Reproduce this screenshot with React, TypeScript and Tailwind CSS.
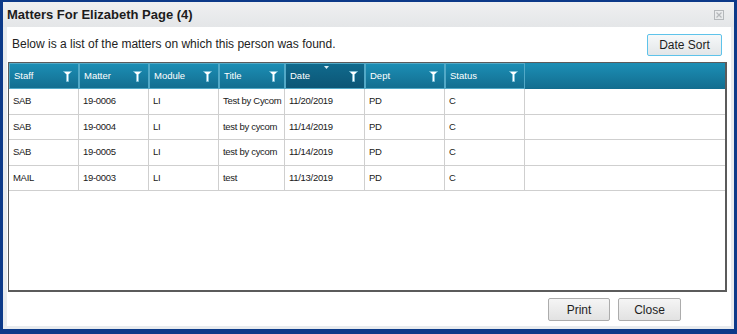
import React from 'react';

type Row = { staff: string; matter: string; module: string; title: string; date: string; dept: string; status: string };

const rows: Row[] = [
    { staff: 'SAB', matter: '19-0006', module: 'LI', title: 'Test by Cycom', date: '11/20/2019', dept: 'PD', status: 'C' },
    { staff: 'SAB', matter: '19-0004', module: 'LI', title: 'test by cycom', date: '11/14/2019', dept: 'PD', status: 'C' },
    { staff: 'SAB', matter: '19-0005', module: 'LI', title: 'test by cycom', date: '11/14/2019', dept: 'PD', status: 'C' },
    { staff: 'MAIL', matter: '19-0003', module: 'LI', title: 'test', date: '11/13/2019', dept: 'PD', status: 'C' },
];

const columns: { key: keyof Row; label: string; width: string }[] = [
    { key: 'staff', label: 'Staff', width: 'w-[70px]' },
    { key: 'matter', label: 'Matter', width: 'w-[70px]' },
    { key: 'module', label: 'Module', width: 'w-[70px]' },
    { key: 'title', label: 'Title', width: 'w-[66px]' },
    { key: 'date', label: 'Date', width: 'w-[80px]' },
    { key: 'dept', label: 'Dept', width: 'w-[80px]' },
    { key: 'status', label: 'Status', width: 'w-[80px]' },
];

const FilterIcon: React.FC = () => (
    <svg width="9" height="11" viewBox="0 0 9 11" className="shrink-0">
        <path d="M0.5 0.5 H8.5 L5.5 3.5 V10.5 H3.5 V3.5 Z" fill="#ffffff" stroke="#7fc3da" strokeWidth="0.8" />
    </svg>
);

const CloseIcon: React.FC = () => (
    <svg width="10" height="10" viewBox="0 0 10 10">
        <rect x="0.5" y="0.5" width="9" height="9" fill="none" stroke="#b5b8bb" />
        <path d="M2.5 2.5 L7.5 7.5 M7.5 2.5 L2.5 7.5" stroke="#b5b8bb" strokeWidth="1.2" />
    </svg>
);

const App: React.FC = () => {
    return (
        <div className="w-[737px] h-[334px] bg-[#0c3a89] pt-[2px] pl-[3px] pr-[3px] pb-[5px] flex flex-col font-['Liberation_Sans',Arial,sans-serif]">
            <div className="flex-1 flex flex-col bg-[#e8ebee]">
                {/* title bar */}
                <div className="h-[25px] flex items-center justify-between pl-[4px] pr-[10px] bg-gradient-to-b from-[#eff0f1] to-[#e4e6e8]">
                    <span className="text-[13px] font-bold text-[#1c1c1c]">Matters For Elizabeth Page (4)</span>
                    <CloseIcon />
                </div>

                <div className="flex-1 flex flex-col bg-white mx-[4px] mb-[3px] mr-[3px]">
                    <div className="flex items-center justify-between pl-[5px] pr-[9px] pt-[4px] h-[31px]">
                        <span className="text-[12px] text-[#222] -mt-[2px]">Below is a list of the matters on which this person was found.</span>
                        <button className="w-[75px] h-[22px] rounded-[2px] border border-[#5ec3ea] bg-gradient-to-b from-[#f6f8f9] to-[#e3e6e8] text-[12px] text-[#1e1e1e]">
                            Date Sort
                        </button>
                    </div>

                    {/* grid */}
                    <div className="ml-px mr-[4px] mt-[4px] h-[230px] border border-[#5b5b5b] border-b-2 border-r-2 flex flex-col">
                        <div className="h-[26px] flex bg-gradient-to-b from-[#1c8fb6] to-[#136d8f]">
                            {columns.map(col => (
                                <div
                                    key={col.key}
                                    className={`${col.width} relative h-full flex items-center justify-between pl-[4px] pr-[6px] border border-[#52a9c7] ${col.key === 'date' ? 'bg-gradient-to-b from-[#106a8d] to-[#0c5676] border-[#0b4f6e]' : ''}`}
                                >
                                    <span className="text-[9.5px] text-white">{col.label}</span>
                                    <FilterIcon />
                                    {col.key === 'date' && (
                                        <svg width="5" height="3" viewBox="0 0 5 3" className="absolute top-[2px] left-[38px]">
                                            <path d="M0 0 H5 L2.5 3 Z" fill="#d9eef5" />
                                        </svg>
                                    )}
                                </div>
                            ))}
                            <div className="flex-1" />
                        </div>
                        {rows.map((row, i) => (
                            <div key={i} className="h-[25.5px] flex border-b border-[#cfcfcf]">
                                {columns.map(col => (
                                    <div key={col.key} className={`${col.width} h-full flex items-center pl-[4px] border-r border-[#cfcfcf] text-[9.5px] tracking-[-0.3px] text-[#202020] whitespace-nowrap overflow-hidden`}>
                                        {row[col.key]}
                                    </div>
                                ))}
                                <div className="flex-1" />
                            </div>
                        ))}
                        <div className="flex-1" />
                    </div>

                    <div className="flex-1 flex items-center justify-end gap-[8px] pr-[50px] pt-[1px]">
                        <button className="w-[62px] h-[23px] rounded-[2px] border border-[#acacac] bg-gradient-to-b from-[#f5f5f5] to-[#e2e2e2] text-[12px] text-[#1e1e1e]">
                            Print
                        </button>
                        <button className="w-[63px] h-[23px] rounded-[2px] border border-[#acacac] bg-gradient-to-b from-[#f5f5f5] to-[#e2e2e2] text-[12px] text-[#1e1e1e]">
                            Close
                        </button>
                    </div>
                </div>
            </div>
        </div>
    );
};

export default App;
